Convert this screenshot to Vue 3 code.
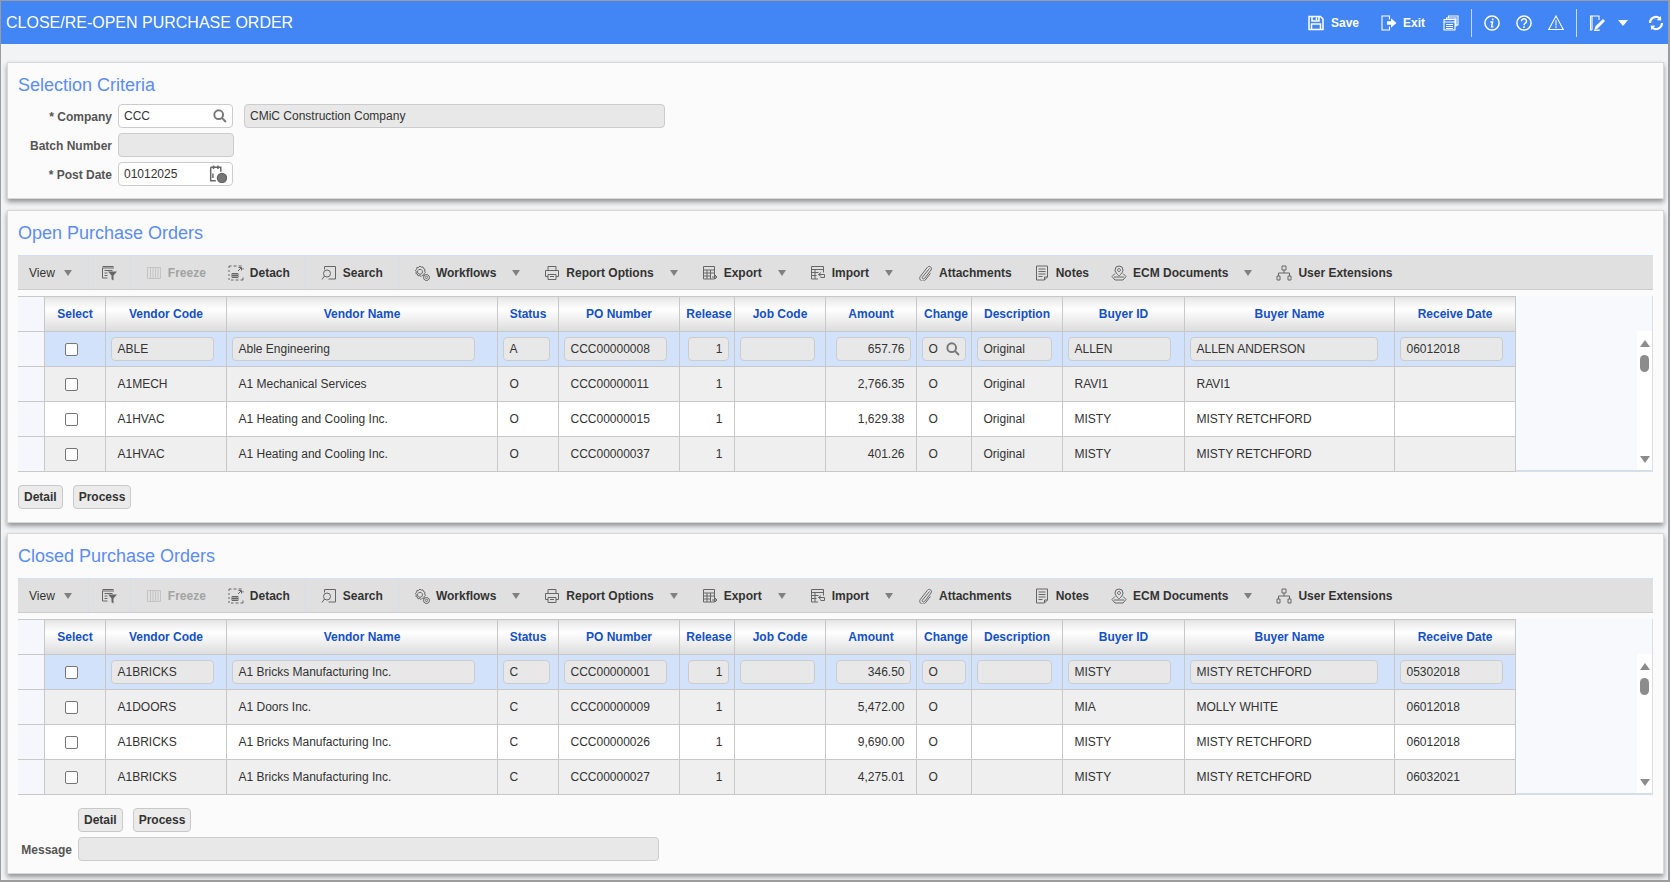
<template>
  <div class="page">
    <header class="topbar">
      <h1>CLOSE/RE-OPEN PURCHASE ORDER</h1>
      <div class="top-actions">
        <span class="top-btn"><svg class="ico" viewBox="0 0 16 16"><path :d="icons.save" /></svg><b>Save</b></span>
        <span class="top-btn exit"><svg class="ico thin" viewBox="0 0 16 16"><path :d="icons.exit" /><path class="solid" :d="fills.exit" /></svg><b>Exit</b></span>
        <svg class="ico stack thin" viewBox="0 0 16 16"><path :d="icons.windows" /></svg>
        <i class="top-sep"></i>
        <svg class="ico" viewBox="0 0 16 16"><path :d="icons.info" /></svg>
        <svg class="ico" viewBox="0 0 16 16"><path :d="icons.help" /></svg>
        <svg class="ico thin" viewBox="0 0 16 16"><path :d="icons.warn" /></svg>
        <i class="top-sep"></i>
        <svg class="ico thin" viewBox="0 0 16 16"><path :d="icons.note" /><path class="solid" :d="fills.note" /></svg>
        <i class="top-caret"></i>
        <svg class="ico refresh" viewBox="0 0 16 16"><path :d="icons.refresh" /><path class="solid" :d="fills.refresh" /></svg>
      </div>
    </header>

    <section class="panel criteria">
      <h2>Selection Criteria</h2>
      <div class="form-row">
        <label>* Company</label>
        <div class="field lookup">CCC<svg class="mag" viewBox="0 0 16 16"><path :d="icons.mag" /></svg></div>
        <div class="field ro desc">CMiC Construction Company</div>
      </div>
      <div class="form-row">
        <label>Batch Number</label>
        <div class="field ro batch"></div>
      </div>
      <div class="form-row">
        <label>* Post Date</label>
        <div class="field lookup">01012025<svg class="cal" viewBox="0 0 16 16"><path :d="icons.cal" /><circle cx="11.5" cy="11.5" r="4" /></svg></div>
      </div>
    </section>

    <section v-for="sec in sections" :key="sec.title" class="panel" :class="sec.cls">
      <h2>{{ sec.title }}</h2>

      <div class="toolbar">
        <div v-for="(grp, g) in toolbar" :key="g" class="tb-group" :class="grp.cls">
          <span v-for="it in grp.items" :key="it.label || it.icon" class="tb-item" :class="{ off: it.off, menu: it.menu }">
            <svg v-if="it.icon" class="ico" viewBox="0 0 16 16">
              <path :d="icons[it.icon]" />
              <path v-if="fills[it.icon]" class="solid" :d="fills[it.icon]" />
            </svg>
            <em v-if="it.label">{{ it.label }}</em>
            <i v-if="it.menu" class="caret"></i>
          </span>
        </div>
      </div>

      <div class="grid-wrap">
        <table class="grid">
          <colgroup>
            <col style="width: 26px" />
            <col style="width: 61px" />
            <col v-for="c in columns" :key="c.key" :style="{ width: c.width + 'px' }" />
          </colgroup>
          <thead>
            <tr>
              <th></th>
              <th>Select</th>
              <th v-for="c in columns" :key="c.key" :class="{ tight: c.tight }">{{ c.label }}</th>
            </tr>
          </thead>
          <tbody>
            <tr v-for="(row, r) in sec.rows" :key="row.po" :class="{ current: r === 0, odd: r % 2 === 1 }">
              <td class="rowhead"></td>
              <td><span class="check"></span></td>
              <td v-for="c in columns" :key="c.key" :class="{ num: c.right }">
                <span v-if="r === 0" class="cell-input" :style="{ width: c.input + 'px' }">
                  {{ row[c.key] }}
                  <svg v-if="c.key === 'change' && sec.lookup" class="mag" viewBox="0 0 16 16"><path :d="icons.mag" /></svg>
                </span>
                <span v-else class="cell-text">{{ row[c.key] }}</span>
              </td>
            </tr>
          </tbody>
        </table>
        <div class="scroll">
          <i class="arrow up"></i>
          <i class="thumb"></i>
          <i class="arrow down"></i>
        </div>
      </div>

      <div class="actions">
        <button>Detail</button>
        <button>Process</button>
      </div>
      <div v-if="sec.message" class="form-row message">
        <label>Message</label>
        <div class="field ro msg"></div>
      </div>
    </section>
  </div>
</template>

<script setup>
const icons = {
  save: 'M1 1.500h11.500l2.500 2.500v10.500h-14zM4 1.500v4.500h7v-4.500M8.500 2.500v2.500M3.500 14.500v-5.500h9v5.500',
  exit: 'M8.500 4.500v-3.500h-7.500v14h7.500v-3.500',
  windows: 'M5.500 3v-2h9.500v9h-2M3.500 4.500v-1.500h9.500v8.500M1 4.500h11v10.500h-11zM1 7h11M3 9.500h7M3 11.500h7M3 13.500h7',
  info: 'M8 .9a7.100 7.100 0 1 0 0 14.200a7.100 7.100 0 1 0 0-14.200zM8.700 3.400v1.800M6.400 7h2.200l-1 4.700h1.800',
  help: 'M8 .9a7.100 7.100 0 1 0 0 14.200a7.100 7.100 0 1 0 0-14.200zM5.500 6.200a2.500 2.300 0 1 1 3.900 1.800c-1 .7-1.400 1-1.400 2.300M8 11.200v1.700',
  warn: 'M8 1l7.300 13.500h-14.600zM8 5.200v5.300M8 11.300v1.700',
  note: 'M10 5v-4h-8.500v14h1.500M1.500 1h1.500v14M5 15h6',
  refresh: 'M2 8a6 6 0 0 1 9.800-4.600M14 8a6 6 0 0 1-9.800 4.600',
  mag: 'M6.500 1.500a5 5 0 1 0 0 10a5 5 0 1 0 0-10zM10.200 10.200l4.600 4.600',
  cal: 'M4 .5v3M8 .5v3M1.500 2h9v4M1.500 2v12h4.500M3.500 7.500v4',
  filter: 'M1.500 1.500h11M1 3h12M1.500 3v10h5M3.500 5.500h8M3.500 8h3M3.500 10.500h3',
  freeze: 'M1.500 2.500h13v11h-13zM4.500 2.500v11M7 2.500v11M9.500 2.500v11M12 2.500v11',
  detach: 'M1 3v-2h2.500M5.500 1h3M10.500 1h3M15 3v1.500M15 12.500v2.500h-2.500M10.500 15h-3M5.500 15h-2.500M1 15v-2M1 5v2M1 9v2M4 8.500h6v4h-6zM6 8.500v4M8 8.500v4M4 10.500h6M10 6l3.500-3.500M10.500 2.500h3v3',
  search: 'M3.500 4.500v-3h11v12.500h-7M2.500 8.500a3.500 3.500 0 1 1 7 0a3.500 3.500 0 1 1-7 0zM3.500 11l-2.500 3.500',
  gears: 'M6 1l1.200 1.200 1.700-.3.600 1.600 1.500.8-.4 1.700.9 1.400-1.300 1.100-.2 1.700-1.700.1-1.200 1.200-1.400-1-1.700.3-.6-1.600-1.500-.8.4-1.700-.9-1.400 1.300-1.100.2-1.700 1.700-.1zM6 4.300a2.500 2.500 0 1 0 .01 0zM12.500 9.500a3 3 0 1 0 .01 0zM12.500 11.200a1.200 1.200 0 1 0 .01 0z',
  print: 'M4 5.500v-4h8v4M1.500 5.500h13v6h-2.500M1.500 5.500v6h2.500M4 9.500h8v5h-8zM6 11.500h4',
  export: 'M1.500 1.500h11v12.500h-11zM1.500 5h11M5 5v9M8.500 5v9M1.500 8h11M1.500 11h7M10 12h5M13 10l2 2-2 2',
  import: 'M1.500 1.500h12v6M1.500 1.500v12.500h6.500M1.500 4.500h12M5 4.500v9.500M1.500 7.500h7M1.500 10.500h5M8.500 9.500h6M11 7.500l-2.500 2 2.500 2M14.500 9.500v3h-4',
  clip: 'M12.500 3.500l-7 8.500c-1 1.300 1 2.800 2 1.500l6.500-8.500c1.800-2.400-1.800-5-3.600-2.700l-7 9c-2.500 3.300 2.500 6.800 5 3.600l5-6.500',
  notes: 'M2.500 1h11v11l-3 3h-8zM10.500 15v-3h3M4.500 4h7M4.500 6.500h7M4.500 9h7M4.500 11.500h4',
  ecm: 'M8 1a4 4 0 0 1 4 4c0 2.500-4 6-4 6s-4-3.500-4-6a4 4 0 0 1 4-4zM8 3.500a1.500 1.500 0 1 0 .01 0zM4 8.500l-3 3 3 3.500h8l3-3.500-3-3M3 12h10',
  tree: 'M6 1h4v4h-4zM8 5v3M2.500 8h11M2.500 8v3M13.500 8v3M1 11h3v4h-3zM12 11h3v4h-3z'
}

// solid parts that sit on top of the outlined icon
const fills = {
  exit: 'M6 6.300h4v-3l5.500 4.700-5.500 4.700v-3h-4z',
  note: 'M5.500 14.500l.8-3 7.700-7.500 2 2-7.700 7.700zM5 15h5v.8h-5z',
  refresh: 'M12.800 1l.5 4.500-4.500-.3zM3.200 15l-.5-4.500 4.500.3z',
  filter: 'M7 6.500h9l-3.500 4v5l-2-1.200v-3.800z'
}

const columns = [
  { key: 'vendor', label: 'Vendor Code', width: 121, input: 103 },
  { key: 'name', label: 'Vendor Name', width: 271, input: 243 },
  { key: 'status', label: 'Status', width: 61, input: 47 },
  { key: 'po', label: 'PO Number', width: 121, input: 103 },
  { key: 'release', label: 'Release', width: 55, input: 41, right: true, tight: true },
  { key: 'job', label: 'Job Code', width: 91, input: 75 },
  { key: 'amount', label: 'Amount', width: 91, input: 75, right: true },
  { key: 'change', label: 'Change', width: 55, input: 44, tight: true },
  { key: 'desc', label: 'Description', width: 91, input: 75 },
  { key: 'buyerId', label: 'Buyer ID', width: 122, input: 103 },
  { key: 'buyer', label: 'Buyer Name', width: 210, input: 188 },
  { key: 'date', label: 'Receive Date', width: 121, input: 103 }
]

const toolbar = [
  { cls: 'g-view', items: [{ label: 'View', menu: true }] },
  { cls: 'g-filter', items: [{ icon: 'filter' }] },
  { items: [{ icon: 'freeze', label: 'Freeze', off: true }, { icon: 'detach', label: 'Detach' }] },
  { items: [{ icon: 'search', label: 'Search' }] },
  {
    cls: 'g-last',
    items: [
      { icon: 'gears', label: 'Workflows', menu: true },
      { icon: 'print', label: 'Report Options', menu: true },
      { icon: 'export', label: 'Export', menu: true },
      { icon: 'import', label: 'Import', menu: true },
      { icon: 'clip', label: 'Attachments' },
      { icon: 'notes', label: 'Notes' },
      { icon: 'ecm', label: 'ECM Documents', menu: true },
      { icon: 'tree', label: 'User Extensions' }
    ]
  }
]

function row(vendor, name, status, po, amount, desc, buyerId, buyer, date) {
  return { vendor, name, status, po, release: '1', job: '', amount, change: 'O', desc, buyerId, buyer, date }
}

const sections = [
  {
    title: 'Open Purchase Orders',
    cls: 'open',
    lookup: true,
    rows: [
      row('ABLE', 'Able Engineering', 'A', 'CCC00000008', '657.76', 'Original', 'ALLEN', 'ALLEN ANDERSON', '06012018'),
      row('A1MECH', 'A1 Mechanical Services', 'O', 'CCC00000011', '2,766.35', 'Original', 'RAVI1', 'RAVI1', ''),
      row('A1HVAC', 'A1 Heating and Cooling Inc.', 'O', 'CCC00000015', '1,629.38', 'Original', 'MISTY', 'MISTY RETCHFORD', ''),
      row('A1HVAC', 'A1 Heating and Cooling Inc.', 'O', 'CCC00000037', '401.26', 'Original', 'MISTY', 'MISTY RETCHFORD', '')
    ]
  },
  {
    title: 'Closed Purchase Orders',
    cls: 'closed',
    message: true,
    rows: [
      row('A1BRICKS', 'A1 Bricks Manufacturing Inc.', 'C', 'CCC00000001', '346.50', '', 'MISTY', 'MISTY RETCHFORD', '05302018'),
      row('A1DOORS', 'A1 Doors Inc.', 'C', 'CCC00000009', '5,472.00', '', 'MIA', 'MOLLY WHITE', '06012018'),
      row('A1BRICKS', 'A1 Bricks Manufacturing Inc.', 'C', 'CCC00000026', '9,690.00', '', 'MISTY', 'MISTY RETCHFORD', '06012018'),
      row('A1BRICKS', 'A1 Bricks Manufacturing Inc.', 'C', 'CCC00000027', '4,275.01', '', 'MISTY', 'MISTY RETCHFORD', '06032021')
    ]
  }
]
</script>

<style>
html,
body {
  margin: 0;
  background: #f2f3f5;
}
</style>

<style scoped>
.page {
  box-sizing: border-box;
  width: 1670px;
  height: 882px;
  overflow: hidden;
  background: #f2f3f5;
  border: solid #9c9c9c;
  border-width: 1px 2px 2px 1px;
  font-family: "Liberation Sans", Arial, sans-serif;
  font-size: 12px;
  color: #333;
}

.topbar {
  height: 43px;
  background: #4285f4;
  display: flex;
  align-items: center;
  justify-content: space-between;
  color: #fff;
  margin-bottom: 18px;
}
.topbar h1 {
  margin: 0 0 0 5px;
  font-size: 16px;
  font-weight: normal;
  white-space: nowrap;
}
.top-actions {
  display: flex;
  align-items: center;
  gap: 16px;
  padding-right: 4px;
}
.top-btn {
  display: flex;
  align-items: center;
  gap: 7px;
  font-size: 12px;
}
.top-btn.exit {
  margin-left: 6px;
  gap: 6px;
}
.stack {
  margin-left: 2px;
}
.top-sep {
  width: 1px;
  height: 28px;
  background: #c8dafb;
  margin: 0 -4px;
}
.top-caret {
  width: 0;
  height: 0;
  border: solid transparent;
  border-width: 6px 5px 0;
  border-top-color: #fff;
  margin: 0 4px 0 -3px;
}
.ico {
  width: 16px;
  height: 16px;
  flex: none;
  fill: none;
  stroke: #fff;
  stroke-width: 1.5;
}
.ico.thin {
  stroke-width: 1.1;
}
.refresh {
  stroke-width: 2.2;
}
.ico .solid {
  stroke: none;
  fill: #fff;
}

.panel {
  box-sizing: border-box;
  margin: 0 4px 11px 6px;
  padding: 10px;
  background: #fbfbfb;
  border: 1px solid #d8d8d8;
  box-shadow: 0 3px 5px rgba(0, 0, 0, 0.4);
}
.criteria {
  height: 137px;
}
.open {
  height: 313px;
  margin-bottom: 10px;
}
.closed {
  height: 341px;
}
.panel h2 {
  margin: 0 0 10px;
  height: 24px;
  line-height: 24px;
  font-size: 18px;
  font-weight: normal;
  color: #5b8cf5;
}
.criteria h2 {
  margin-bottom: 7px;
}

.form-row {
  display: flex;
  align-items: center;
  height: 24px;
  margin-bottom: 5px;
}
.form-row label {
  width: 94px;
  margin-right: 6px;
  padding-top: 1px;
  text-align: right;
  font-weight: bold;
  color: #555;
  white-space: nowrap;
}
.field {
  box-sizing: border-box;
  height: 24px;
  display: flex;
  align-items: center;
  padding: 0 5px;
  border: 1px solid #ccc;
  border-radius: 4px;
  background: #fff;
}
.lookup {
  width: 115px;
  justify-content: space-between;
}
.ro {
  background: #e8e8e8;
}
.desc {
  width: 421px;
  margin-left: 11px;
}
.batch {
  width: 116px;
}
.mag {
  width: 14px;
  height: 14px;
  fill: none;
  stroke: #777;
  stroke-width: 2.2;
  flex: none;
}
.cal {
  width: 18px;
  height: 18px;
  fill: none;
  stroke: #666;
  stroke-width: 1.3;
  flex: none;
}
.cal circle {
  fill: #777;
}

.toolbar {
  box-sizing: border-box;
  height: 35px;
  display: flex;
  align-items: stretch;
  background: #e0e0e0;
  border-top: 1px solid #d4e0f2;
  border-bottom: 1px solid #ccc;
  margin-bottom: 6px;
}
.tb-group {
  display: flex;
  align-items: center;
  gap: 22px;
  padding: 0 15px;
  border-right: 1px solid #d6dee8;
}
.g-view {
  padding: 0 14px 0 11px;
}
.g-filter {
  padding: 0 13px 0 12px;
}
.g-last {
  border-right: 0;
}
.tb-item {
  display: flex;
  align-items: center;
  gap: 6px;
  font-weight: bold;
  color: #333;
  white-space: nowrap;
}
.tb-item em {
  font-style: normal;
}
.g-view .tb-item {
  font-weight: normal;
  margin-right: 0;
}
.g-view .caret {
  margin-left: 3px;
}
.tb-item .ico {
  stroke: #666;
  stroke-width: 1;
}
.tb-item .ico .solid {
  fill: #666;
}
.tb-item.off {
  color: #a3a3a3;
}
.tb-item.off .ico {
  stroke: #c4c4c4;
}
.tb-item.menu {
  margin-right: 2px;
}
.caret {
  width: 0;
  height: 0;
  margin-left: 10px;
  border: solid transparent;
  border-width: 6px 4px 0;
  border-top-color: #808080;
}

.grid-wrap {
  display: flex;
  height: 176px;
  box-sizing: border-box;
  justify-content: space-between;
  background: #f8f9fc;
  border: solid #d6dee8;
  border-width: 0 1px 2px 0;
}
.grid {
  width: 1497px;
  table-layout: fixed;
  border-collapse: collapse;
  align-self: flex-start;
}
.grid th {
  box-sizing: border-box;
  height: 35px;
  padding: 0 0 0 1px;
  font-size: 12px;
  color: #1450c8;
  background: linear-gradient(#e6e6e6, #fff 35%, #dcdcdc);
  border: 1px solid #c8c8c8;
  border-left: 0;
  white-space: nowrap;
}
.grid th.tight {
  padding-left: 5px;
}
.grid th:first-child {
  background: #f5f7fc;
}
.grid td {
  height: 35px;
  box-sizing: border-box;
  padding: 0 0 0 5px;
  border: 1px solid #c8c8c8;
  border-left: 0;
  background: #fff;
  white-space: nowrap;
}
.grid .odd td {
  background: #efefef;
}
.grid .current td {
  background: #d2e2fb;
}
.grid td.rowhead {
  background: #f5f7fc;
  padding: 0;
}
.grid td.num {
  text-align: right;
  padding: 0 5px 0 0;
}
.check {
  display: block;
  box-sizing: border-box;
  width: 13px;
  height: 13px;
  margin-left: 15px;
  background: #fff;
  border: 1px solid #777;
  border-radius: 2px;
}
.cell-input {
  box-sizing: border-box;
  display: inline-flex;
  align-items: center;
  justify-content: space-between;
  height: 24px;
  padding: 0 5px 0 6px;
  vertical-align: middle;
  background: #e8e8e8;
  border: 1px solid #ccc;
  border-radius: 4px;
}
.num .cell-input {
  justify-content: flex-end;
}
.cell-text {
  padding-left: 7px;
}
.num .cell-text {
  padding: 0 6px 0 0;
}

.scroll {
  width: 15px;
  margin-top: 35px;
  background: #fff;
  display: flex;
  flex-direction: column;
  align-items: center;
  padding: 9px 0 7px;
  box-sizing: border-box;
}
.arrow {
  width: 0;
  height: 0;
  border: solid transparent;
  border-width: 0 5px 7px;
  border-bottom-color: #8c8c8c;
}
.arrow.down {
  border-width: 7px 5px 0;
  border-top-color: #8c8c8c;
  margin-top: auto;
}
.thumb {
  width: 9px;
  height: 17px;
  margin-top: 8px;
  border-radius: 5px;
  background: #8c8c8c;
}

.actions {
  display: flex;
  gap: 10px;
  margin-top: 13px;
}
.actions button {
  box-sizing: border-box;
  height: 24px;
  padding: 0 5px;
  font: bold 12px "Liberation Sans", Arial, sans-serif;
  color: #333;
  background: #ebebeb;
  border: 1px solid #c8c8c8;
  border-radius: 4px;
}
.closed .actions {
  margin-left: 60px;
}
.message {
  margin-top: 5px;
}
.message label {
  width: 54px;
}
.msg {
  width: 581px;
}
</style>
